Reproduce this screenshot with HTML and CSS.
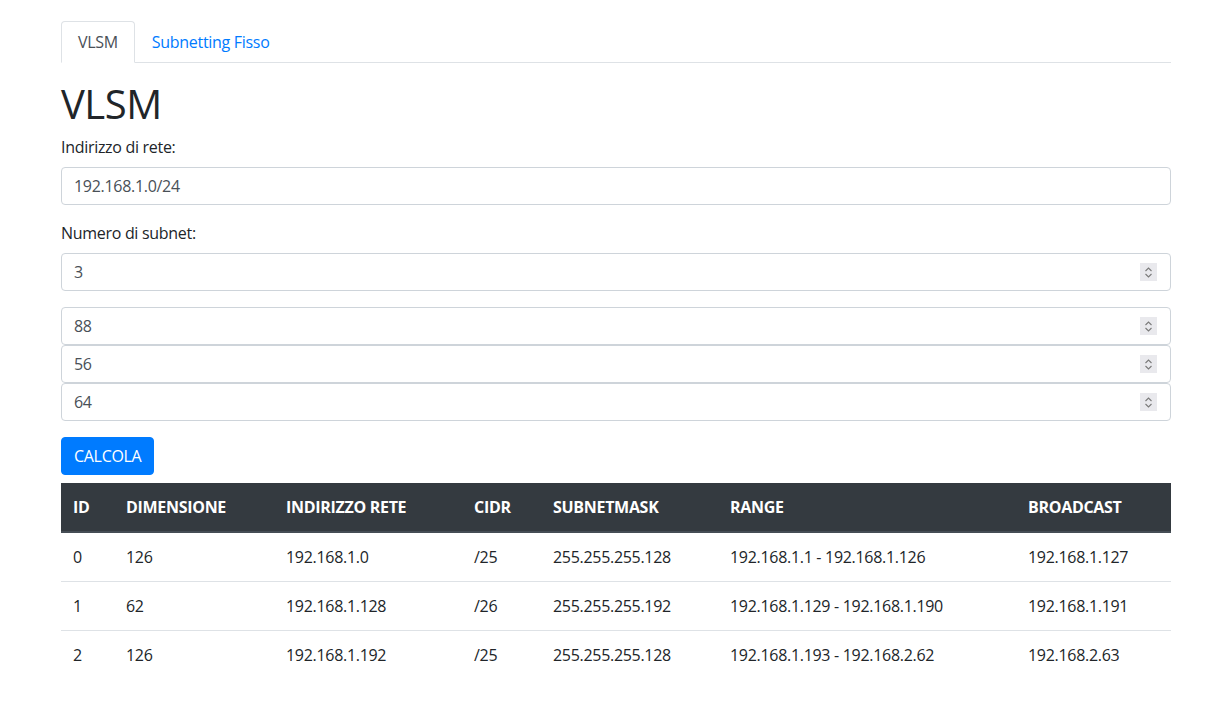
FILE: index.html
```html
<!DOCTYPE html>
<html lang="it">
<head>
<meta charset="utf-8">
<title>VLSM</title>
<link rel="stylesheet" href="styles.css">
</head>
<body>
<div class="container">
  <ul class="nav-tabs">
    <li><a class="tab active" href="#">VLSM</a></li>
    <li><a class="tab" href="#">Subnetting Fisso</a></li>
  </ul>
  <h1 class="title">VLSM</h1>
  <div class="form-group">
    <label class="label" for="net">Indirizzo di rete:</label>
    <input class="form-control" id="net" type="text" value="192.168.1.0/24">
  </div>
  <div class="form-group">
    <label class="label" for="num">Numero di subnet:</label>
    <div class="num-field"><input class="num-input" id="num" type="text" value="3"><span class="spin"><svg width="9" height="13" viewBox="0 0 9 13"><path d="M1.5 5 L4.5 2 L7.5 5 M1.5 8 L4.5 11 L7.5 8" fill="none" stroke="#7a7a7a" stroke-width="1.1"/></svg></span></div>
  </div>
  <div class="hosts">
    <div class="num-field"><input class="num-input" type="text" value="88"><span class="spin"><svg width="9" height="13" viewBox="0 0 9 13"><path d="M1.5 5 L4.5 2 L7.5 5 M1.5 8 L4.5 11 L7.5 8" fill="none" stroke="#7a7a7a" stroke-width="1.1"/></svg></span></div>
    <div class="num-field"><input class="num-input" type="text" value="56"><span class="spin"><svg width="9" height="13" viewBox="0 0 9 13"><path d="M1.5 5 L4.5 2 L7.5 5 M1.5 8 L4.5 11 L7.5 8" fill="none" stroke="#7a7a7a" stroke-width="1.1"/></svg></span></div>
    <div class="num-field"><input class="num-input" type="text" value="64"><span class="spin"><svg width="9" height="13" viewBox="0 0 9 13"><path d="M1.5 5 L4.5 2 L7.5 5 M1.5 8 L4.5 11 L7.5 8" fill="none" stroke="#7a7a7a" stroke-width="1.1"/></svg></span></div>
  </div>
  <button class="btn" type="button">CALCOLA</button>
  <table class="table">
    <thead>
      <tr>
        <th class="c-id">ID</th>
        <th class="c-dim">DIMENSIONE</th>
        <th class="c-net">INDIRIZZO RETE</th>
        <th class="c-cidr">CIDR</th>
        <th class="c-mask">SUBNETMASK</th>
        <th class="c-range">RANGE</th>
        <th class="c-bc">BROADCAST</th>
      </tr>
    </thead>
    <tbody>
      <tr><td>0</td><td>126</td><td>192.168.1.0</td><td>/25</td><td>255.255.255.128</td><td>192.168.1.1 - 192.168.1.126</td><td>192.168.1.127</td></tr>
      <tr><td>1</td><td>62</td><td>192.168.1.128</td><td>/26</td><td>255.255.255.192</td><td>192.168.1.129 - 192.168.1.190</td><td>192.168.1.191</td></tr>
      <tr><td>2</td><td>126</td><td>192.168.1.192</td><td>/25</td><td>255.255.255.128</td><td>192.168.1.193 - 192.168.2.62</td><td>192.168.2.63</td></tr>
    </tbody>
  </table>
</div>
</body>
</html>
```
FILE: styles.css
```css
* { box-sizing: border-box; }
html, body { margin: 0; padding: 0; background: #fff; }
body {
  font-family: "Open Sans", "Noto Sans", "Liberation Sans", sans-serif;
  font-size: 16px;
  line-height: 24px;
  letter-spacing: -0.3px;
  color: #212529;
}
.container {
  width: 1110px;
  margin-left: 61px;
  padding-top: 21px;
}
.nav-tabs {
  list-style: none;
  margin: 0;
  padding: 0;
  display: flex;
  border-bottom: 1px solid #dee2e6;
}
.nav-tabs li { margin-bottom: -1px; }
.tab {
  display: block;
  padding: 8px 16px;
  border: 1px solid transparent;
  border-top-left-radius: 4px;
  border-top-right-radius: 4px;
  color: #007bff;
  text-decoration: none;
}
.tab.active {
  color: #495057;
  background: #fff;
  border-color: #dee2e6 #dee2e6 #fff;
}
.title {
  margin: 17px 0 7px;
  font-size: 40px;
  line-height: 48px;
  font-weight: 400;
  letter-spacing: -0.5px;
}
.form-group { margin-bottom: 16px; }
.label {
  display: block;
  margin-bottom: 8px;
}
.form-control, .num-field {
  display: block;
  width: 100%;
  height: 38px;
  border: 1px solid #ced4da;
  border-radius: 4px;
  background: #fff;
  color: #495057;
  font: inherit;
  letter-spacing: inherit;
}
.form-control { padding: 6px 12px; }
.num-field {
  display: flex;
  align-items: center;
  padding: 0 13px 0 12px;
}
.num-input {
  flex: 1;
  min-width: 0;
  border: 0;
  padding: 0;
  margin: 0;
  font: inherit;
  letter-spacing: inherit;
  color: #495057;
  background: transparent;
  outline: none;
}
.spin {
  width: 17px;
  height: 18px;
  background: #e9e9ed;
  display: flex;
  align-items: center;
  justify-content: center;
}
.hosts { margin-bottom: 16px; }
.btn {
  display: inline-block;
  height: 38px;
  padding: 6px 12px;
  border: 1px solid #007bff;
  border-radius: 4px;
  background: #007bff;
  color: #fff;
  font: inherit;
  letter-spacing: inherit;
  margin: 0 0 8px;
  vertical-align: top;
}
.table {
  width: 1110px;
  border-collapse: collapse;
  table-layout: fixed;
}
.table th, .table td {
  padding: 12px;
  text-align: left;
  vertical-align: top;
  white-space: nowrap;
}
.table th {
  background: #343a40;
  color: #fff;
  font-weight: 700;
  border-bottom: 2px solid #454d55;
}
.table td { border-top: 1px solid #dee2e6; }
.table tbody tr:first-child td { border-top: 0; }
.c-id { width: 53px; }
.c-dim { width: 160px; }
.c-net { width: 188px; }
.c-cidr { width: 79px; }
.c-mask { width: 177px; }
.c-range { width: 298px; }
.c-bc { width: 155px; }
```
